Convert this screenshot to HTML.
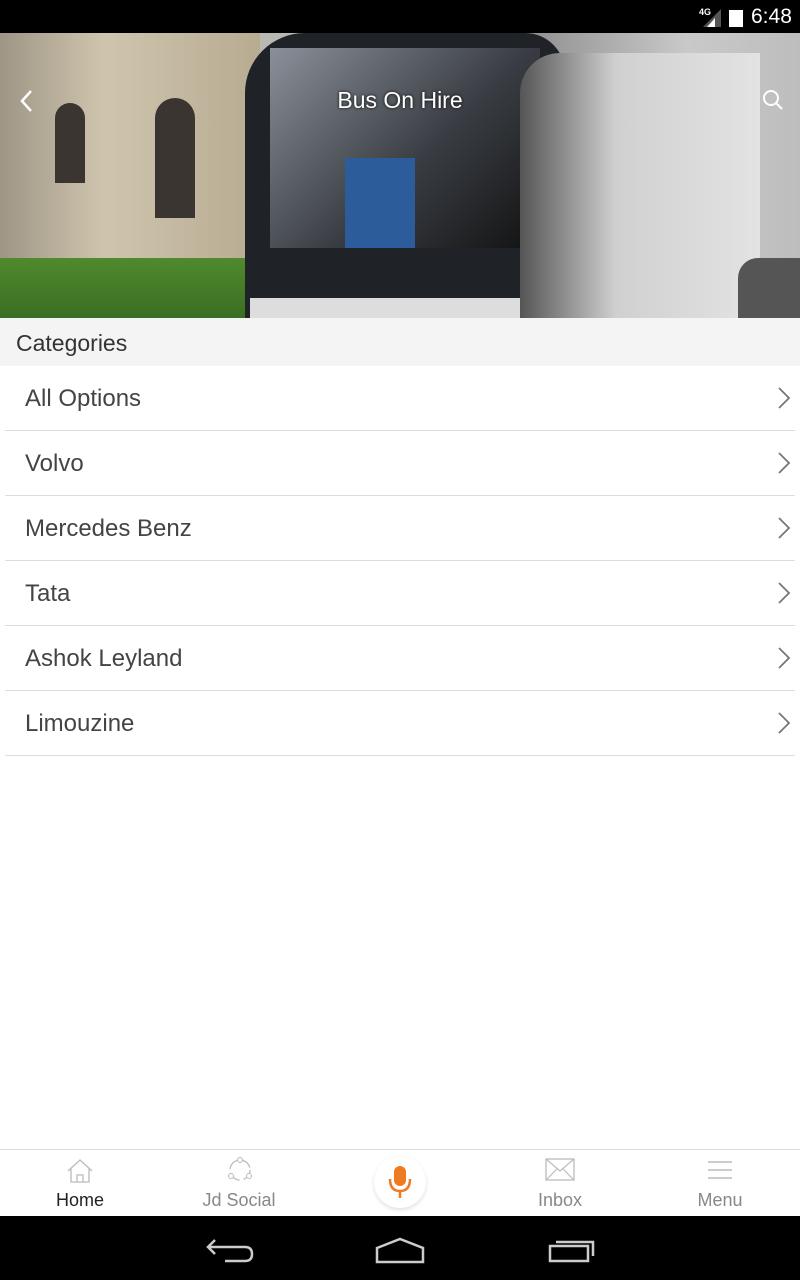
<!DOCTYPE html>
<html><head><meta charset="utf-8"><style>
*{margin:0;padding:0;box-sizing:border-box}
body{width:800px;height:1280px;background:#fff;font-family:"Liberation Sans",sans-serif;position:relative;overflow:hidden}
.sb{position:absolute;top:0;left:0;width:800px;height:33px;background:#000;color:#fff}
.hero{position:absolute;top:33px;left:0;width:800px;height:285px;overflow:hidden;background:#b9b8b3}
.hero div{position:absolute}
.cat{position:absolute;top:318px;left:0;width:800px;height:48px;background:#f4f4f4;font-size:23px;color:#333;padding:12px 16px}
.row{position:absolute;left:5px;width:790px;height:65px;border-bottom:1px solid #dcdcdc;font-size:24px;color:#444;padding:19px 20px}
.row svg{position:absolute;right:4px;top:21px}
.nav{position:absolute;top:1149px;left:0;width:800px;height:67px;border-top:1px solid #ddd;background:#fff}
.nav .t{position:absolute;top:40px;font-size:18px;color:#888;transform:translateX(-50%)}
.sys{position:absolute;top:1216px;left:0;width:800px;height:64px;background:#000}
</style></head><body>
<div class="sb">
<svg style="position:absolute;left:699px;top:6px" width="24" height="22"><text x="0" y="9" font-size="9" fill="#fff" font-family="Liberation Sans" font-weight="bold">4G</text><polygon points="4,21 22,21 22,3" fill="#555"/><polygon points="8,21 16,21 16,12" fill="#fff"/></svg>
<div style="position:absolute;left:729px;top:8px;width:14px;height:19px;background:#fff;border-top:2px solid #000"></div>
<div style="position:absolute;left:751px;top:5px;font-size:21px;color:#fff">6:48</div>
</div>
<div class="hero">
<div style="left:0;top:0;width:260px;height:285px;background:linear-gradient(90deg,#9e9585,#cfc5ae 40%,#b7ab91)"></div>
<div style="left:55px;top:70px;width:30px;height:80px;background:#3a3530;border-radius:15px 15px 0 0"></div>
<div style="left:155px;top:65px;width:40px;height:120px;background:#3a3530;border-radius:20px 20px 0 0"></div>
<div style="left:0;top:225px;width:245px;height:60px;background:linear-gradient(#4f8a2e,#3a6e22)"></div>
<div style="left:520px;top:0;width:280px;height:285px;background:linear-gradient(90deg,#8d8d8d,#c9c9c9 60%,#bdbdbd)"></div>
<div style="left:245px;top:0;width:320px;height:285px;background:#1f2226;border-radius:60px 40px 0 0"></div>
<div style="left:270px;top:15px;width:270px;height:200px;background:linear-gradient(135deg,#8a9099,#3a3e44 55%,#111)"></div>
<div style="left:345px;top:125px;width:70px;height:90px;background:#2c5c9a"></div>
<div style="left:520px;top:20px;width:240px;height:265px;background:linear-gradient(90deg,#555,#d0d0d0 40%,#e3e3e3);border-radius:40px 0 0 0"></div>
<div style="left:250px;top:265px;width:270px;height:20px;background:#ddd"></div>
<div style="left:738px;top:225px;width:62px;height:60px;background:#555;border-radius:20px 0 0 0"></div>
<svg style="position:absolute;left:18px;top:56px" width="20" height="24"><path d="M13 2 L4 12 L13 22" stroke="#fff" stroke-width="2.5" fill="none"/></svg>
<div style="position:absolute;left:0;width:800px;top:54px;text-align:center;font-size:23px;color:#fff;text-shadow:0 0 3px #000">Bus On Hire</div>
<svg style="position:absolute;left:761px;top:55px" width="24" height="24"><circle cx="10" cy="10" r="7" stroke="#fff" stroke-width="2" fill="none"/><path d="M15 15 L21 21" stroke="#fff" stroke-width="2"/></svg>
</div>
<div class="cat">Categories</div>
<div class="row" style="top:366px">All Options<svg width="14" height="22"><path d="M2 1 L12 11 L2 21" stroke="#777" stroke-width="1.8" fill="none"/></svg></div>
<div class="row" style="top:431px">Volvo<svg width="14" height="22"><path d="M2 1 L12 11 L2 21" stroke="#777" stroke-width="1.8" fill="none"/></svg></div>
<div class="row" style="top:496px">Mercedes Benz<svg width="14" height="22"><path d="M2 1 L12 11 L2 21" stroke="#777" stroke-width="1.8" fill="none"/></svg></div>
<div class="row" style="top:561px">Tata<svg width="14" height="22"><path d="M2 1 L12 11 L2 21" stroke="#777" stroke-width="1.8" fill="none"/></svg></div>
<div class="row" style="top:626px">Ashok Leyland<svg width="14" height="22"><path d="M2 1 L12 11 L2 21" stroke="#777" stroke-width="1.8" fill="none"/></svg></div>
<div class="row" style="top:691px">Limouzine<svg width="14" height="22"><path d="M2 1 L12 11 L2 21" stroke="#777" stroke-width="1.8" fill="none"/></svg></div>
<div class="nav">
<svg style="position:absolute;left:66px;top:8px" width="28" height="26"><path d="M2 13 L14 2 L26 13 M5 11 V24 H23 V11 M11 24 V17 H17 V24" stroke="#bbb" stroke-width="1.3" fill="none"/></svg>
<div class="t" style="left:80px;color:#222">Home</div>
<svg style="position:absolute;left:226px;top:6px" width="28" height="28"><circle cx="14" cy="14" r="10" stroke="#bbb" stroke-width="1.3" fill="none" stroke-dasharray="12 4"/><circle cx="14" cy="4" r="2.5" fill="#fff" stroke="#bbb"/><circle cx="5" cy="20" r="2.5" fill="#fff" stroke="#bbb"/><circle cx="23" cy="20" r="2.5" fill="#fff" stroke="#bbb"/></svg>
<div class="t" style="left:239px">Jd Social</div>
<div style="position:absolute;left:374px;top:6px;width:52px;height:52px;border-radius:50%;background:#fff;box-shadow:0 2px 4px rgba(0,0,0,.12)"></div>
<svg style="position:absolute;left:386px;top:14px" width="28" height="36"><rect x="8" y="2" width="12" height="20" rx="6" fill="#f07a20"/><path d="M4 15 Q4 27 14 27 Q24 27 24 15" stroke="#f07a20" stroke-width="2.5" fill="none"/><path d="M14 27 V34" stroke="#f07a20" stroke-width="2.5"/></svg>
<svg style="position:absolute;left:545px;top:8px" width="30" height="24"><rect x="1" y="1" width="28" height="21" stroke="#bbb" stroke-width="1.3" fill="none"/><path d="M1 1 L15 13 L29 1 M1 22 L12 11 M29 22 L18 11" stroke="#bbb" stroke-width="1.2" fill="none"/></svg>
<div class="t" style="left:560px">Inbox</div>
<svg style="position:absolute;left:707px;top:10px" width="26" height="20"><path d="M1 2 H25 M1 10 H25 M1 18 H25" stroke="#bbb" stroke-width="1.5"/></svg>
<div class="t" style="left:720px">Menu</div>
</div>
<div class="sys">
<svg style="position:absolute;left:205px;top:20px" width="50" height="28"><path d="M10 4 L3 11 L10 18 M3 11 H40 Q47 11 47 18 Q47 25 40 25 H20" stroke="#ccc" stroke-width="2.5" fill="none"/></svg>
<svg style="position:absolute;left:374px;top:20px" width="52" height="28"><path d="M3 12 L26 3 L49 12 V26 H3 Z" stroke="#ccc" stroke-width="2.5" fill="none"/></svg>
<svg style="position:absolute;left:546px;top:20px" width="52" height="28"><rect x="4" y="10" width="38" height="15" stroke="#ccc" stroke-width="2.5" fill="none"/><path d="M10 6 H47 V20" stroke="#ccc" stroke-width="2.5" fill="none"/></svg>
</div>
</body></html>
